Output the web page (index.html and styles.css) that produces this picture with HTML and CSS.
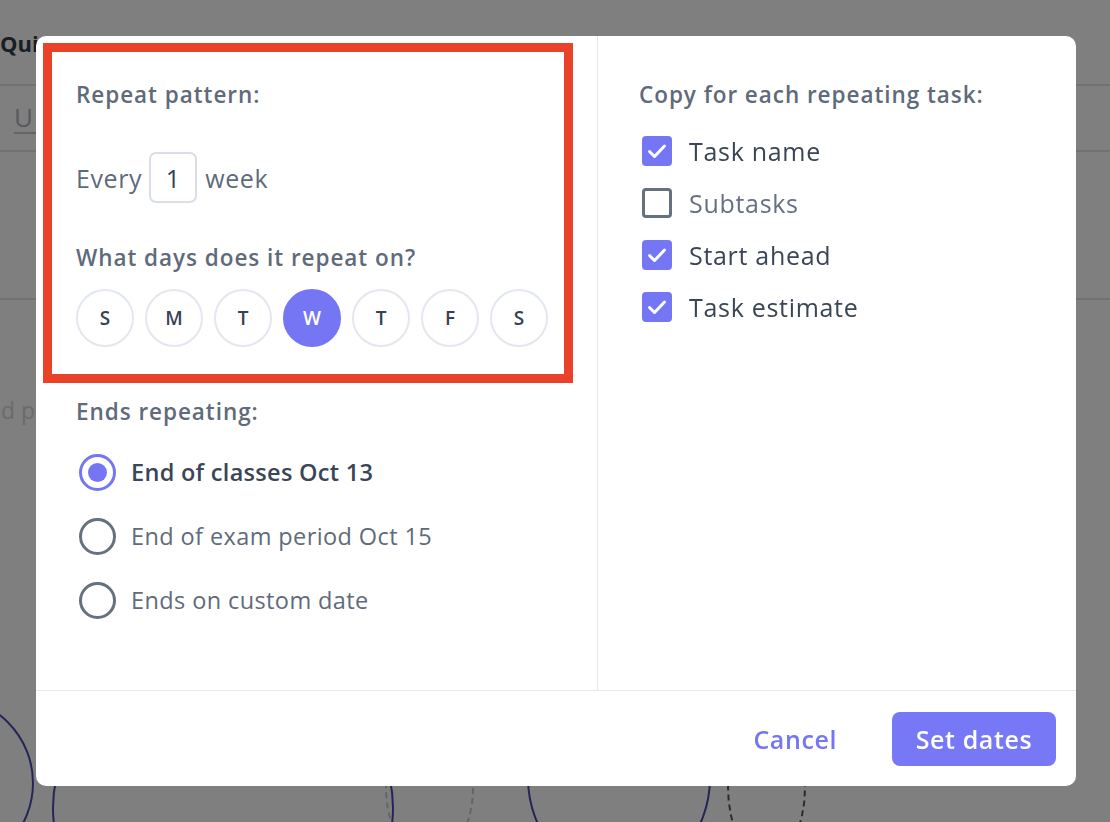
FILE: index.html
```html
<!doctype html>
<html>
<head>
<link rel="stylesheet" href="styles.css">
</head>
<body>
<div class="page">
	<div class="topbar">
		<span class="quick">Quick add</span>
		<span class="select">Select a cell</span>
	</div>
	<div class="rule"></div>
	<div class="under"><span>U</span></div>
	<div class="rule"></div>
	<div class="spacer"></div>
	<div class="rule"></div>
	<div class="hint">d p</div>
	<div class="rings">
		<span class="ring r1"></span>
		<span class="ring r2"></span>
		<span class="ring r3"></span>
		<span class="ring r4"></span>
		<span class="ring r5"></span>
	</div>
</div>

<div class="overlay"></div>

<div class="modal">
	<div class="body">
		<div class="col left">
			<div class="label">Repeat pattern:</div>
			<div class="every">
				<span>Every</span>
				<span class="num">1</span>
				<span>week</span>
			</div>
			<div class="label days-label">What days does it repeat on?</div>
			<div class="days">
				<span class="day">S</span>
				<span class="day">M</span>
				<span class="day">T</span>
				<span class="day on">W</span>
				<span class="day">T</span>
				<span class="day">F</span>
				<span class="day">S</span>
			</div>
			<div class="label ends-label">Ends repeating:</div>
			<div class="radios">
				<div class="radio picked"><span class="dot"></span>End of classes Oct 13</div>
				<div class="radio"><span class="dot"></span>End of exam period Oct 15</div>
				<div class="radio"><span class="dot"></span>Ends on custom date</div>
			</div>
		</div>
		<div class="col right">
			<div class="label">Copy for each repeating task:</div>
			<div class="checks">
				<div class="check"><span class="box tick"><svg viewBox="0 0 30 30"><polyline points="7.5,15.5 12.5,20.5 22.5,10"/></svg></span>Task name</div>
				<div class="check off"><span class="box"></span>Subtasks</div>
				<div class="check"><span class="box tick"><svg viewBox="0 0 30 30"><polyline points="7.5,15.5 12.5,20.5 22.5,10"/></svg></span>Start ahead</div>
				<div class="check"><span class="box tick"><svg viewBox="0 0 30 30"><polyline points="7.5,15.5 12.5,20.5 22.5,10"/></svg></span>Task estimate</div>
			</div>
		</div>
	</div>
	<div class="foot">
		<button class="cancel">Cancel</button>
		<button class="set">Set dates</button>
	</div>
	<div class="mark"></div>
</div>
</body>
</html>
```

FILE: styles.css
```css
body{
	margin:0px;
	padding:0px;
	background:#ffffff;
	font-family:"Open Sans","Noto Sans",sans-serif;
	overflow:hidden;
}

/* page behind the dialog */
.page{
	height:822px;
	overflow:hidden;
}
.topbar{
	display:flex;
	gap:70px;
	padding:28px 0 0 0;
	height:56px;
	box-sizing:border-box;
	font-size:22px;
	font-weight:700;
}
.quick{
	color:#343d4a;
}
.select{
	color:#5054c8;
	font-weight:600;
}
.rule{
	height:2px;
	background:#e2e3e6;
	margin-top:28px;
}
.under{
	height:64px;
	padding-left:14px;
	font-size:26px;
	color:#b0b3b8;
	display:flex;
	align-items:center;
}
.under span{
	border-bottom:2px solid #c8cacd;
	line-height:30px;
	padding-right:40px;
}
.under + .rule{
	margin-top:0px;
}
.spacer{
	height:146px;
}
.spacer + .rule{
	margin-top:0px;
}
.hint{
	margin-top:94px;
	font-size:23px;
	color:#d4d6da;
	padding-left:1px;
}
.rings{
	position:relative;
	margin-top:270px;
	height:200px;
}
.ring{
	position:absolute;
	border-radius:50%;
	border:2px solid #4a4ab0;
}
.r1{ left:-140px; top:0px; width:170px; height:170px; }
.r2{ left:52px; top:-40px; width:338px; height:300px; }
.r3{ left:385px; top:20px; width:85px; height:140px; border:2px dashed #c8c8c8; }
.r4{ left:527px; top:-20px; width:180px; height:200px; }
.r5{ left:727px; top:20px; width:75px; height:140px; border:2px dashed #555555; }

.overlay{
	position:fixed;
	left:0px;
	top:0px;
	right:0px;
	bottom:0px;
	background:rgba(0,0,0,0.5);
}

/* dialog */
.modal{
	position:absolute;
	left:36px;
	top:36px;
	width:1040px;
	height:750px;
	background:#ffffff;
	border-radius:10px;
	display:flex;
	flex-direction:column;
}
.body{
	display:grid;
	grid-template-columns:562px 1fr;
	height:654px;
	border-bottom:1.5px solid #e3e6ec;
}
.col{
	padding-top:45px;
}
.left{
	padding-left:40px;
	border-right:1.5px solid #e3e6ec;
}
.right{
	padding-left:41px;
}
.label{
	font-size:22.5px;
	line-height:28px;
	font-weight:600;
	color:#5f6a7b;
	letter-spacing:0.95px;
}
.every{
	margin-top:43px;
	display:flex;
	align-items:center;
	gap:7px;
	font-size:25px;
	font-weight:500;
	color:#5f6a7b;
	letter-spacing:0.6px;
}
.num{
	width:48px;
	height:51px;
	box-sizing:border-box;
	border:2px solid #d9dee8;
	border-radius:7px;
	display:flex;
	align-items:center;
	justify-content:center;
	color:#374151;
	margin-right:1px;
}
.days-label{
	margin-top:41px;
}
.days{
	margin-top:17px;
	display:flex;
	gap:11px;
}
.day{
	width:58px;
	height:58px;
	box-sizing:border-box;
	border:2px solid #e3e7ef;
	border-radius:50%;
	display:flex;
	align-items:center;
	justify-content:center;
	font-size:19px;
	font-weight:600;
	color:#374151;
}
.day.on{
	background:#7476f4;
	border-color:#7476f4;
	color:#ffffff;
}
.ends-label{
	margin-top:51px;
}
.radios{
	margin-top:26px;
	display:flex;
	flex-direction:column;
	gap:24px;
}
.radio{
	height:40px;
	display:flex;
	align-items:center;
	gap:15px;
	font-size:23.5px;
	font-weight:500;
	color:#5f6a7b;
	letter-spacing:0.4px;
}
.radio .dot{
	width:37px;
	height:37px;
	box-sizing:border-box;
	border:3px solid #667080;
	border-radius:50%;
	margin-left:3px;
	display:flex;
	align-items:center;
	justify-content:center;
}
.radio.picked{
	color:#3a4556;
	font-weight:600;
	letter-spacing:0.3px;
}
.radio.picked .dot{
	border-color:#7476f4;
}
.radio.picked .dot:after{
	content:"";
	width:19px;
	height:19px;
	border-radius:50%;
	background:#7476f4;
}
.checks{
	margin-top:27px;
	display:flex;
	flex-direction:column;
	gap:22px;
}
.check{
	height:30px;
	display:flex;
	align-items:center;
	gap:17px;
	font-size:25px;
	font-weight:500;
	color:#3a4556;
	letter-spacing:0.7px;
}
.check .box{
	width:30px;
	height:30px;
	box-sizing:border-box;
	border:3px solid #667080;
	border-radius:4px;
	margin-left:3px;
}
.check .tick{
	background:#7476f4;
	border:none;
}
.check svg{
	display:block;
	width:30px;
	height:30px;
	fill:none;
	stroke:#ffffff;
	stroke-width:3;
	stroke-linecap:round;
	stroke-linejoin:round;
}
.check.off{
	color:#667080;
}
.foot{
	flex:1;
	display:flex;
	align-items:center;
	justify-content:flex-end;
	padding-right:20px;
	gap:40px;
}
.foot button{
	font-family:inherit;
	font-size:25px;
	font-weight:600;
	border:none;
	cursor:pointer;
	letter-spacing:0.6px;
}
.cancel{
	background:none;
	color:#7476f4;
	padding:0 15px;
}
.set{
	width:164px;
	height:54px;
	border-radius:8px;
	background:#7678f6;
	color:#ffffff;
}

/* highlight box drawn over the first section */
.mark{
	position:absolute;
	left:7px;
	top:7px;
	width:530px;
	height:340px;
	box-sizing:border-box;
	border:9px solid #ea4228;
	pointer-events:none;
}
```
